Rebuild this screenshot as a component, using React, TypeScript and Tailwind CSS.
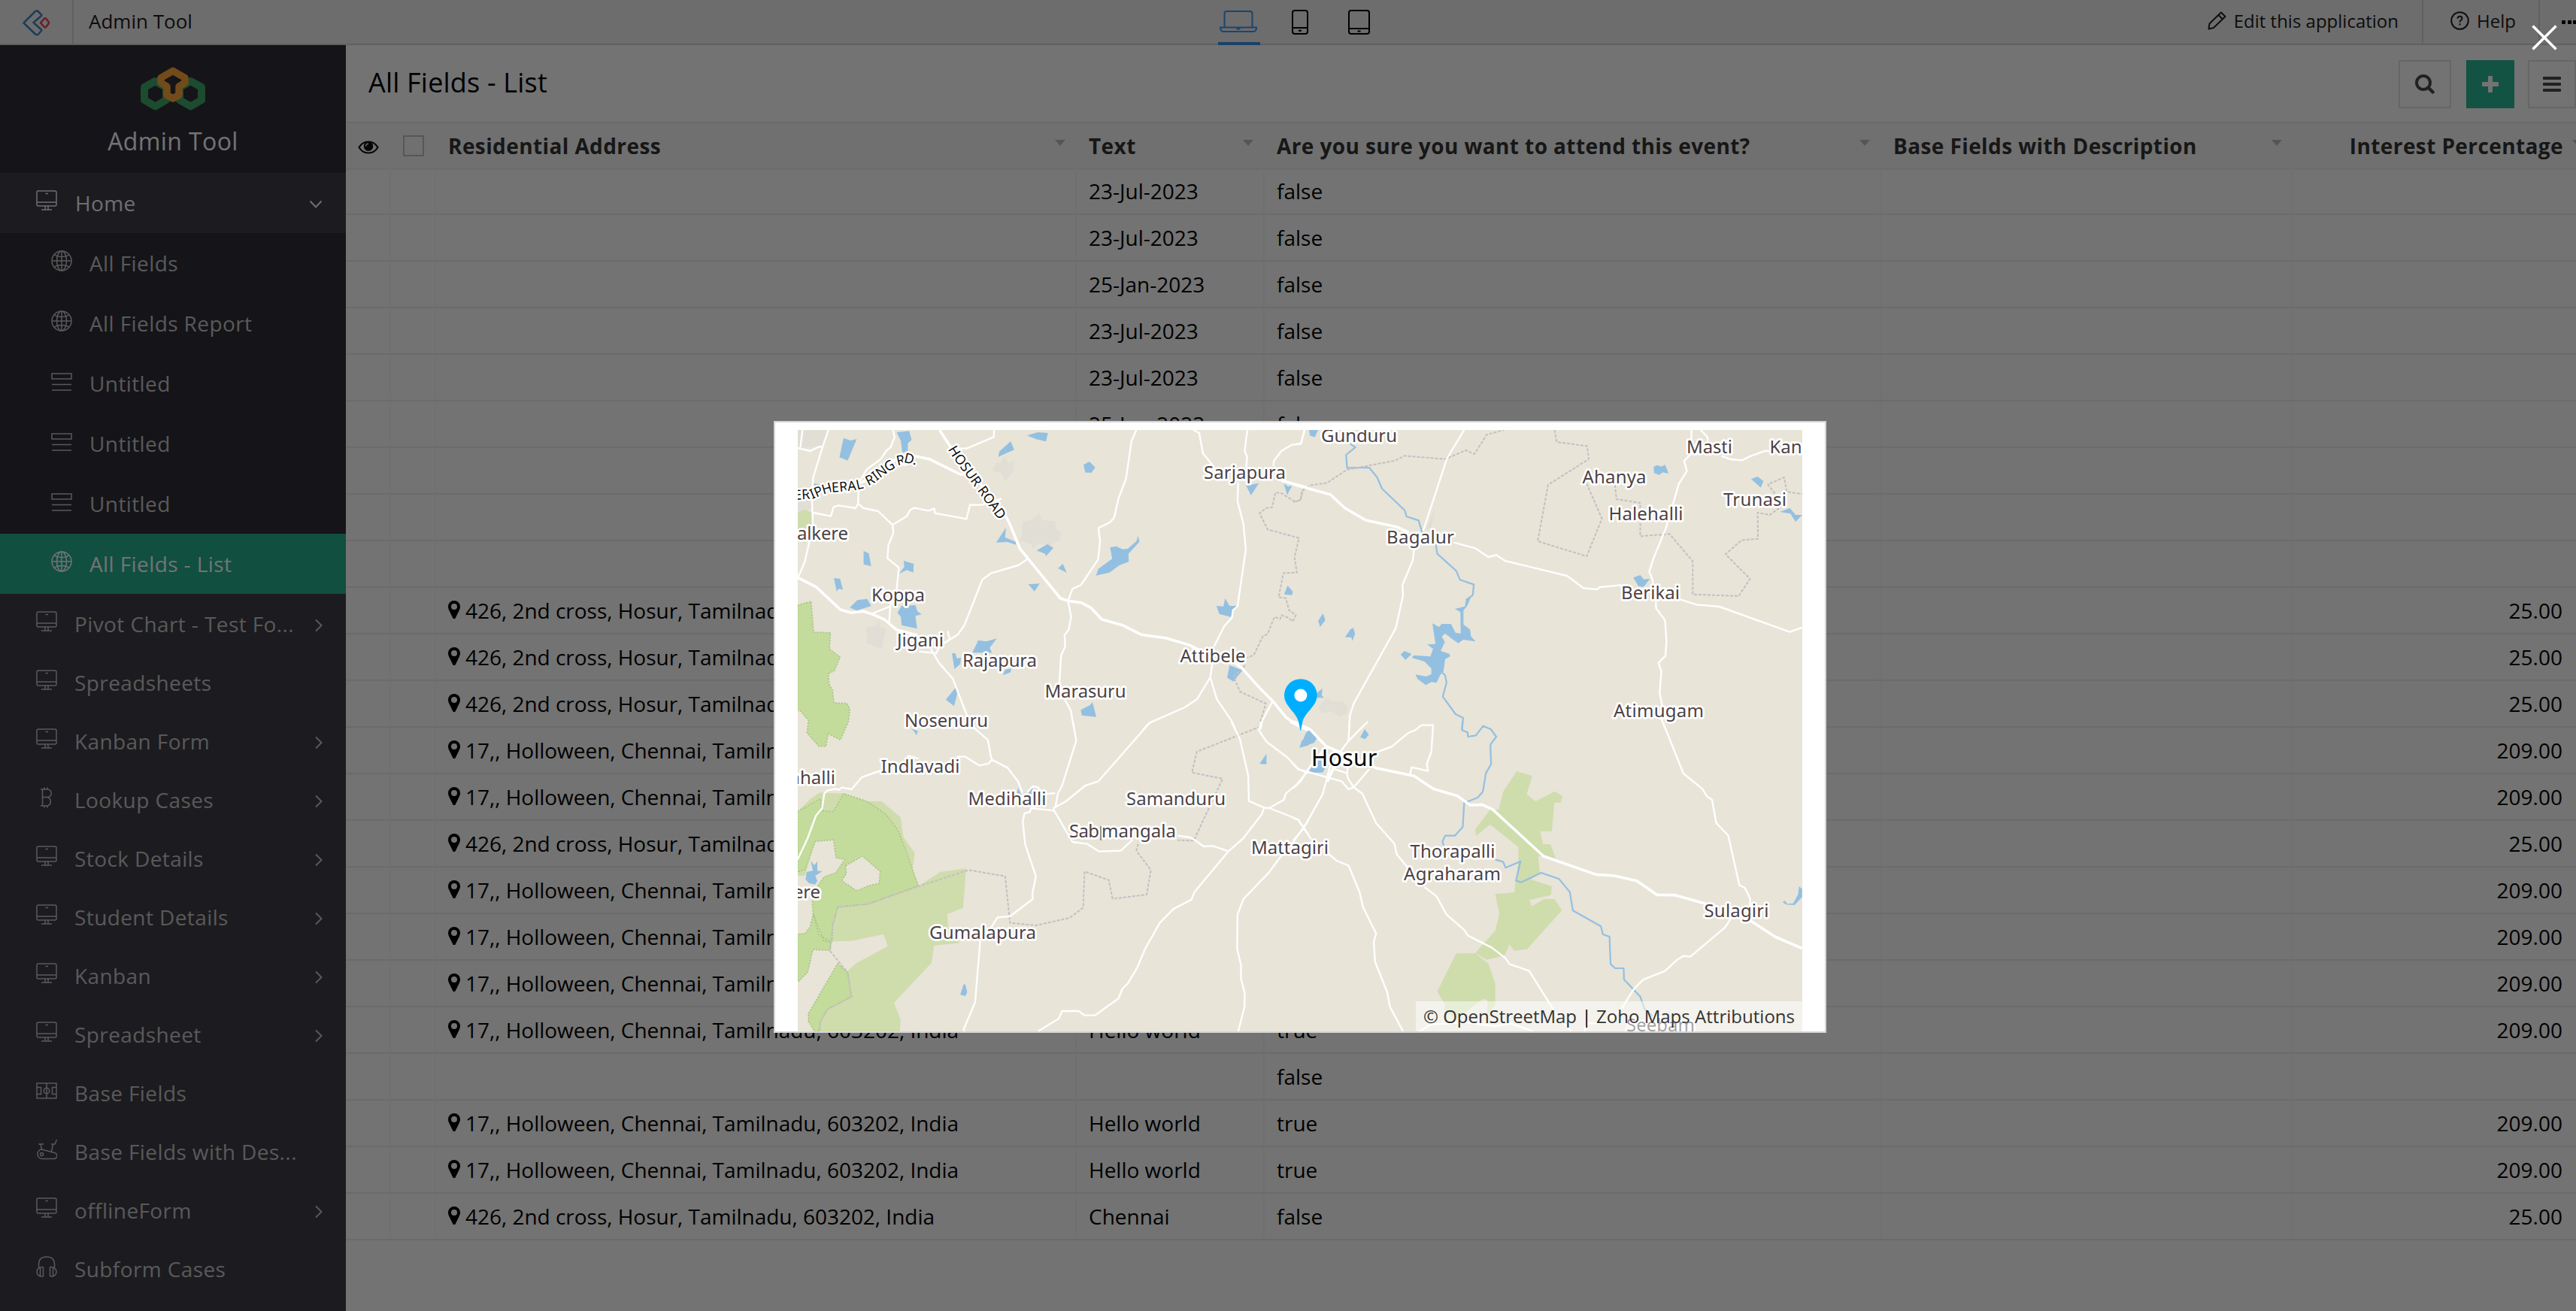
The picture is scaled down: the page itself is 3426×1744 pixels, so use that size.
import type { ReactNode } from "react";

type IconName = "monitor" | "globe" | "list" | "bitcoin" | "field" | "bike" | "headphones";

const iconPaths: Record<IconName, ReactNode> = {
  monitor: (
    <>
      <rect x="1" y="1" width="26" height="20" rx="2" />
      <path d="M1 16h26M12 21v5M16 21v5M7 26h14M12.5 4.500h3.500" />
    </>
  ),
  globe: (
    <>
      <circle cx="14" cy="14" r="13" />
      <ellipse cx="14" cy="14" rx="6.500" ry="13" />
      <path d="M14 1v26M1 14h26M4 5.500c5 4 15 4 20 0M4 22.500c5-4 15-4 20 0" />
    </>
  ),
  list: (
    <>
      <rect x="1" y="4" width="26" height="7" />
      <path d="M1 18.500h26M1 26h26" />
    </>
  ),
  bitcoin: <path d="M6 3h9a5 5 0 0 1 0 10.500H8.500M15 13.500a6 6 0 0 1 0 11.500H6M8.500 3v22M11 0.500v2.500M15 0.500v2.500M11 25v2.500M15 25v2.500" />,
  field: (
    <>
      <rect x="1" y="4" width="26" height="20" />
      <path d="M14 4v20M1 9.500h5.500v9H1M27 9.500h-5.500v9H27" />
      <circle cx="14" cy="14" r="3.700" />
    </>
  ),
  bike: (
    <>
      <path d="M3 7h7M6 7l1.500 7M20 7h5l2.500-6M25 7h-2.500l-2 10M7.500 14A6.300 6.300 0 0 0 7.500 26.500H23a4 4 0 0 0 1.500-8L7.500 14z" />
      <circle cx="7.500" cy="20.500" r="2" />
    </>
  ),
  headphones: (
    <path d="M3.500 15v-4C3.500 4 8 1 14 1s10.500 3 10.500 10v4M9.500 14.500v12.500M9.500 14.500C4 14 1 17 1 21s3 6.500 8.500 6M5.500 15.500v11M18.500 14.500v12.500M18.500 14.500c5.500-.5 8.500 2.500 8.500 6.500s-3 6.500-8.500 6M22.500 15.500v11" />
  ),
};

function NavIcon({ name }: { name: IconName }) {
  return (
    <svg viewBox="0 0 28 28" className="size-7 shrink-0" fill="none" stroke="currentColor" strokeWidth="1.500">
      {iconPaths[name]}
    </svg>
  );
}

const subItems: { label: string; icon: IconName; active?: boolean }[] = [
  { label: "All Fields", icon: "globe" },
  { label: "All Fields Report", icon: "globe" },
  { label: "Untitled", icon: "list" },
  { label: "Untitled", icon: "list" },
  { label: "Untitled", icon: "list" },
  { label: "All Fields - List", icon: "globe", active: true },
];

const navItems: { label: string; icon: IconName; more?: boolean }[] = [
  { label: "Pivot Chart - Test Fo...", icon: "monitor", more: true },
  { label: "Spreadsheets", icon: "monitor" },
  { label: "Kanban Form", icon: "monitor", more: true },
  { label: "Lookup Cases", icon: "bitcoin", more: true },
  { label: "Stock Details", icon: "monitor", more: true },
  { label: "Student Details", icon: "monitor", more: true },
  { label: "Kanban", icon: "monitor", more: true },
  { label: "Spreadsheet", icon: "monitor", more: true },
  { label: "Base Fields", icon: "field" },
  { label: "Base Fields with Des...", icon: "bike" },
  { label: "offlineForm", icon: "monitor", more: true },
  { label: "Subform Cases", icon: "headphones" },
];

function Sidebar() {
  return (
    <aside className="flex w-[460px] shrink-0 flex-col overflow-hidden bg-[#3f3d46] tracking-[0.4px] text-[#c6c5c6]">
      <div className="flex h-[170px] shrink-0 flex-col items-center bg-[#2f2e37] pt-[29px] text-white">
        <svg viewBox="0 0 86 58" className="h-[58px] w-[86px]" fill="none" strokeWidth="10" strokeLinejoin="round">
          <path d="M19.500 19L5 27v17l14.500 8.500L34 44V27z" stroke="#3fa66c" />
          <path d="M66.500 19L52 27v17l14.500 8.500L81 44V27z" stroke="#3fa66c" />
          <path
            d="M43 5.300L27 14.500v6.500l8 5v11.500l8 4.500 8-4.500V26l8-5v-6.500z"
            fill="#2f2e37"
            stroke="#fda63b"
            strokeWidth="9.500"
          />
        </svg>
        <div className="mt-[19px] text-[32px] leading-[44px]">Admin Tool</div>
      </div>
      <div className="flex h-20 shrink-0 items-center border-t border-[#45444e] pb-0.5 pl-12 pr-[31px] text-[28px] text-[#f4f4f4]">
        <span className="mb-1.5 flex">
          <NavIcon name="monitor" />
        </span>
        <span className="ml-6 flex-1">Home</span>
        <svg viewBox="0 0 18 12" className="mt-1 h-3 w-[18px]" fill="none" stroke="currentColor" strokeWidth="2">
          <path d="M1.500 1.500L9 9.500l7.500-8" />
        </svg>
      </div>
      <div className="shrink-0 bg-[#2f2e37] text-[28px]">
        {subItems.map((item, i) => (
          <div
            key={i}
            className={
              "flex h-20 items-center gap-[23px] pl-[68px] " + (item.active ? "bg-[#26b08f] text-white" : "")
            }
          >
            <span className="mb-1.5 flex">
              <NavIcon name={item.icon} />
            </span>
            <span>{item.label}</span>
          </div>
        ))}
      </div>
      <div className="shrink-0 text-[28px]">
        {navItems.map((item) => (
          <div key={item.label} className="flex h-[78px] items-center pl-12 pr-[30px] pt-0.5">
            <span className="mb-1.5 flex">
              <NavIcon name={item.icon} />
            </span>
            <span className="ml-[23px] flex-1 whitespace-nowrap">{item.label}</span>
            {item.more && (
              <svg viewBox="0 0 12 18" className="mt-1 h-[18px] w-3" fill="none" stroke="currentColor" strokeWidth="2">
                <path d="M2 1.500L9.500 9 2 16.500" />
              </svg>
            )}
          </div>
        ))}
      </div>
    </aside>
  );
}

function TopBar() {
  return (
    <header className="flex h-[60px] w-[3440px] shrink-0 border-b-2 border-[#d4d4d4] bg-[#f2f2f2] text-[#1b1b1b]">
      <div className="flex w-[98px] shrink-0 items-center justify-center border-r-2 border-[#d4d2dc]">
        <svg viewBox="0 0 36 35" className="mb-px mt-1 h-[35px] w-9" fill="none" strokeWidth="2.600" strokeLinejoin="round">
          <path d="M18.500 1.500q1-.5 2 .5l4.500 4.500q.6.800 0 1.500L14.500 17l10.500 9.500q.6.800 0 1.500l-4 4.500q-2 1.500-4 0L1.500 17.500 17 2q.8-.7 1.500-.5z" stroke="#4088c4" />
          <path d="M29 11.500q1-.6 2 0l3.500 4.500q.6 1.500 0 2.500L31 23q-1 .8-2 0l-5-5.500z" stroke="#e94550" />
        </svg>
      </div>
      <div className="flex w-[1522px] shrink-0 items-center pb-0.5 pl-5 text-[26px]">Admin Tool</div>
      <div className="flex h-[60px] w-[56px] items-start border-b-4 border-[#3c91ec] pl-0.5 pt-[14px]">
        <svg viewBox="0 0 50 29" className="h-[29px] w-[50px]" fill="none" stroke="#3c98f5" strokeWidth="2">
          <path d="M6.500 22V4q0-3 3-3h31q3 0 3 3v18M1 22.500h48c0 3.500-1 5.500-4 5.500H5c-3 0-4-2-4-5.500zM22.500 24.500h5" />
        </svg>
      </div>
      <svg viewBox="0 0 22 33" className="ml-[42px] mt-[13px] h-[33px] w-[22px]" fill="none" stroke="black" strokeWidth="2">
        <rect x="1" y="1" width="20" height="31" rx="3" />
        <path d="M1 24h20M9 27.800h4" />
      </svg>
      <svg viewBox="0 0 29 33" className="ml-[53px] mt-[13px] h-[33px] w-[29px]" fill="none" stroke="black" strokeWidth="2">
        <rect x="1" y="1" width="27" height="31" rx="3" />
        <path d="M1 25h27M12.500 28.500h4" />
      </svg>
      <div className="flex-1" />
      <div className="flex h-[58px] items-center border-r-2 border-[#d4d4d4] pb-[3px] pr-[31px] text-[24px]">
        <svg viewBox="0 0 25 25" className="mr-2.5 size-[25px]" fill="none" stroke="#222" strokeWidth="2">
          <path d="M1.500 23.500l1-7L18 1.500 23.500 7 8 22zM14.500 5l5.500 5.500" strokeLinejoin="round" />
        </svg>
        Edit this application
      </div>
      <div className="flex h-[58px] w-[155px] items-center border-r-2 border-[#d4d4d4] pb-[3px] pl-9 text-[24px]">
        <svg viewBox="0 0 25 25" className="mr-2.5 size-[25px]" fill="none" stroke="#222" strokeWidth="2">
          <circle cx="12.500" cy="12.500" r="11.300" />
          <path d="M9.500 9.800q.2-3 3-3t3 2.600q0 1.600-1.600 2.500-1.400.9-1.400 2.600M12.500 16.300v2.300" />
        </svg>
        Help
      </div>
      <div className="flex h-[58px] w-[62px] items-center gap-[2.500px] pl-[29px]">
        <i className="size-[5px] rounded-[1px] bg-black" />
        <i className="size-[5px] rounded-[1px] bg-black" />
        <i className="size-[5px] rounded-[1px] bg-black" />
      </div>
    </header>
  );
}

const A426 = "426, 2nd cross, Hosur, Tamilnadu, 603202, India";
const A17 = "17,, Holloween, Chennai, Tamilnadu, 603202, India";

type Row = { address?: string; text?: string; attend?: string; interest?: string };

const hosur: Row = { address: A426, text: "Chennai", attend: "false", interest: "25.00" };
const chennai: Row = { address: A17, text: "Hello world", attend: "true", interest: "209.00" };

const rows: Row[] = [
  { text: "23-Jul-2023", attend: "false" },
  { text: "23-Jul-2023", attend: "false" },
  { text: "25-Jan-2023", attend: "false" },
  { text: "23-Jul-2023", attend: "false" },
  { text: "23-Jul-2023", attend: "false" },
  { text: "25-Jan-2023", attend: "false" },
  {},
  {},
  {},
  hosur,
  hosur,
  hosur,
  chennai,
  chennai,
  hosur,
  chennai,
  chennai,
  chennai,
  chennai,
  { attend: "false" },
  chennai,
  chennai,
  hosur,
];

const grid = "grid grid-cols-[60px_60px_852px_250px_820px_548px_400px]";

function Heading({ children }: { children: string }) {
  return (
    <div className="flex h-full items-center justify-between pl-4 pr-[15px]">
      <span>{children}</span>
      <svg viewBox="0 0 14 8" className="mb-[9px] h-2 w-3.5" fill="#bdbdbd">
        <path d="M0 0h14L7 8z" />
      </svg>
    </div>
  );
}

function Pin() {
  return (
    <svg viewBox="0 0 16 24" className="mr-[7px] mb-0.5 h-6 w-4 shrink-0">
      <path
        fillRule="evenodd"
        d="M8 0a8 8 0 0 1 8 8c0 2-.6 3.400-1.200 4.700L9.700 23.200a1.900 1.900 0 0 1-3.400 0L1.200 12.700C.6 11.400 0 10 0 8a8 8 0 0 1 8-8zm0 4a4 4 0 1 0 0 8 4 4 0 0 0 0-8z"
      />
    </svg>
  );
}

function Report() {
  return (
    <main className="flex min-w-0 flex-1 flex-col overflow-hidden bg-white">
      <div className="flex h-[104px] shrink-0 items-center border-b-2 border-[#ebebeb] pl-[30px]">
        <h1 className="flex-1 pb-0.5 text-[36px] tracking-[0.2px]">All Fields - List</h1>
        <div className="mt-0.5 flex">
          <div className="flex h-16 w-[70px] items-center justify-center border-2 border-[#e3e3e3]">
            <svg viewBox="0 0 26 26" className="size-[26px]" fill="none" stroke="#4a4a4a">
              <circle cx="11" cy="11" r="9" strokeWidth="4" />
              <path d="M17.500 17.500l6 6" strokeWidth="4.500" strokeLinecap="round" />
            </svg>
          </div>
          <div className="ml-5 flex h-16 w-16 items-center justify-center bg-[#2cb896]">
            <svg viewBox="0 0 22 22" className="size-[22px]" fill="white">
              <path d="M8 1q0-1 1-1h4q1 0 1 1v7h7q1 0 1 1v4q0 1-1 1h-7v7q0 1-1 1H9q-1 0-1-1v-7H1q-1 0-1-1V9q0-1 1-1h7z" />
            </svg>
          </div>
          <div className="ml-[18px] flex h-16 w-16 items-center justify-center border-2 border-[#e3e3e3]">
            <svg viewBox="0 0 24 20" className="h-5 w-6" fill="#4a4a4a">
              <rect width="24" height="4" rx="1" />
              <rect y="8" width="24" height="4" rx="1" />
              <rect y="16" width="24" height="4" rx="1" />
            </svg>
          </div>
        </div>
      </div>
      <div
        className={
          grid +
          " h-[62px] shrink-0 items-center border-b-2 border-[#efefef] bg-[#f9f9f9] text-[28px] font-bold tracking-[0.4px] text-[#333]"
        }
      >
        <svg viewBox="0 0 28 18" className="ml-4 mt-1 h-[18px] w-7">
          <path d="M1.500 9Q6 1.500 14 1.500T26.500 9Q22 16.500 14 16.500T1.500 9z" fill="none" stroke="#111" strokeWidth="2.200" />
          <circle cx="14" cy="7.500" r="6.300" fill="#111" />
          <path d="M10.500 7.500q.3-3 3.500-3.300" fill="none" stroke="#f9f9f9" strokeWidth="1.300" />
        </svg>
        <i className="ml-4 block size-7 border-2 border-[#c2c2c2]" />
        <Heading>Residential Address</Heading>
        <Heading>Text</Heading>
        <Heading>Are you sure you want to attend this event?</Heading>
        <Heading>Base Fields with Description</Heading>
        <div className="flex w-[385px] items-center justify-end gap-3">
          <span>Interest Percentage</span>
          <svg viewBox="0 0 14 8" className="mb-[9px] h-2 w-3.5" fill="#bdbdbd">
            <path d="M0 0h14L7 8z" />
          </svg>
        </div>
      </div>
      <div className="-mt-0.5 text-[28px] text-black">
        {rows.map((row, i) => (
          <div key={i} className={grid + " h-[62px] border-b-2 border-[#eeeeee]"}>
            <div className="border-r-2 border-[#f8f8f8]" />
            <div className="border-r-2 border-[#f8f8f8]" />
            <div className="flex items-center border-r-2 border-[#f8f8f8] pl-4">
              {row.address && (
                <>
                  <Pin />
                  <span className="tracking-[-0.02px]">{row.address}</span>
                </>
              )}
            </div>
            <div className="flex items-center border-r-2 border-[#f8f8f8] pl-4">{row.text}</div>
            <div className="flex items-center border-r-2 border-[#f8f8f8] pl-4">{row.attend}</div>
            <div className="border-r-2 border-[#f8f8f8]" />
            <div className="flex w-[358px] items-center justify-end">{row.interest}</div>
          </div>
        ))}
      </div>
    </main>
  );
}

/* ---- Map tile geometry, stored per quadrant in tile units ---- */

type Tile = {
  transform: string;
  park: string;
  forest: string;
  clearing: string;
  built: string;
  water: string;
  river: string;
  border: string;
  minor: string;
  major: string;
};

const tiles: Tile[] = [
  {
    transform: "translate(-41 -22) scale(0.45918 0.33333)",
    park: "M89 395L110 383L130 395L134 450L110 518L89 500Z",
    forest:
      "M89 765L128 750L135 873L184 875L181 940L212 972L196 1025L178 1040L180 1080L190 1105L194 1155L232 1157L240 1180L236 1230L213 1303L177 1278L171 1328L150 1328L116 1275L120 1225L97 1187L89 1187Z",
    clearing: "",
    built:
      "M89 66L178 66L165 130L89 138Z M89 330L130 330L130 380L89 395Z M665 195L675 200L688 170L700 198L718 190L712 235L690 270L680 240L652 228Z M740 432L765 425L788 398L795 425L835 430L838 460L851 475L850 505L815 530L790 515L770 540L765 520L730 510L738 490Z M287 850L313 850L325 820L327 850L345 860L333 940L290 918Z",
    water:
      "M222 98L242 108L260 102L234 188L210 175Z M376 75L412 70L419 105L408 120L408 155L392 155L388 110Z M753 88L785 75L814 78L808 112L780 103Z M706 111L716 145L670 173L673 152Z M917 205L934 192L951 215L940 236L922 236Z M692 456L690 495L720 512L722 524L697 513L664 515Z M781 547L812 522L830 536L808 570L806 560Z M857 600L868 635L843 618Z M757 682L790 679L775 710Z M1075 489L1079 512L1047 560L1048 592L1020 607L992 635L953 647L960 620L1000 580L994 535L1012 530L1030 542L1045 540L1070 510Z M280 549L295 558L302 610L280 602Z M396 588L425 600L424 635L405 625L383 640L398 612Z M194 657L212 660L220 703L208 700L202 710Z M290 740L302 768L260 787L240 775L262 745Z M390 768L430 765L436 790L448 802L430 808L435 859L390 845L388 812L378 795Z M612 905L635 910L666 898L645 935L652 955L595 955Z M536 957L546 958L550 978L562 975L560 1000L543 1020Z M708 1018L706 1033L683 1045L690 1022Z M546 1095L551 1120L542 1168L518 1142Z M943 1153L954 1211L912 1205L909 1183L935 1165Z M1327 738L1340 768L1360 768L1343 812L1310 800L1302 768L1322 770Z M1388 288L1425 278L1402 327Z M1497 280L1510 292L1521 288L1507 325Z M1508 687L1523 710L1521 725L1498 722Z M1340 1005L1378 1025L1362 1050L1352 1070L1333 1055Z M135 280L152 283L140 298Z",
    river: "",
    border:
      "M1568 292L1553 305L1545 345L1530 353L1490 318L1473 315L1463 375L1447 377L1427 398L1450 463L1541 497L1528 575L1535 635L1496 637L1482 733L1503 737L1512 785L1532 805L1523 830L1510 815L1490 805L1487 820L1470 812L1450 880L1436 890L1410 965L1390 975 M1385 1005L1352 1050L1370 1110L1445 1158L1425 1250",
    minor:
      "M178 66L162 130L134 255L130 330L133 450L110 590L90 655 M103 66L97 135 M89 138L126 150L150 133L162 132 M365 66L370 95L358 135L345 150L330 182L290 222L266 275L264 360L280 378L322 390L364 445L366 478L352 525L349 578L382 615L376 700L357 770L354 838 M264 360L257 378L207 367L193 374L185 410L133 396 M364 445L405 410L415 385L427 377L468 388L485 380L486 398L578 421L588 365L622 365L680 340 M658 66L657 94L578 140L550 140 M303 800L357 770 M475 940L498 995L538 1058L578 1200L600 1255 M440 950L490 957L500 930 M523 868L530 900L510 920L553 882L572 845L624 663L650 637L728 606L754 582 M1070 66L1056 110L1040 260L1018 340L1006 415L993 435L960 457L965 510L959 583L910 684L885 700L872 748L881 812L874 862L862 885L864 930L852 965L846 1100L880 1185L890 1260 M1235 66L1252 78L1263 160L1290 205 M1392 66L1388 100L1384 150L1391 175L1388 215 M1365 275L1363 350L1380 440L1387 543L1363 770L1350 785L1347 815L1325 848L1295 930 M1557 66L1547 120L1520 125L1490 150L1468 190L1467 210 M1290 1000L1284 1053L1246 1140L1210 1173L1108 1235L1090 1260 M1284 1053L1303 1140L1345 1225L1357 1260 M1465 1148L1435 1225L1430 1260",
    major:
      "M500 66L530 130L690 405L703 440L733 540L850 738L872 748L910 755L938 775L970 822L1030 845L1085 883L1155 896L1225 925L1260 950 M1350 990L1375 1015L1420 1085L1465 1148L1505 1215L1546 1250 M89 325L180 300L275 275L320 240L375 180L430 170L470 182L560 243L575 243 M89 655L142 692L213 783L243 795L280 790L303 800L340 822L375 863L435 885 M1490 268L1568 297",
  },
  {
    transform: "translate(-41 388) scale(0.45918 0.33333)",
    park: "M89 358L125 310L153 283L222 287L290 318L332 318L387 382L395 460L428 525L422 590L440 655L502 600L577 586L568 743L522 768L525 820L555 860L555 884L484 893L477 962L368 1122L387 1190L385 1236L137 1236L120 1195L120 1165L150 1105L205 965L233 995L260 963L350 896L338 848L245 875L189 877L183 913L133 910L118 1000L93 1035L89 1035L89 847L110 847L125 820L134 770L130 690L165 620L200 603L225 550L200 543L193 472L140 478L110 615L89 615Z",
    forest:
      "M89 358L155 308L158 355L192 360L222 287L290 318L345 370L378 430L400 505L438 655L293 728L205 740L190 815L189 877L165 877L135 770L150 850L183 877L183 913L133 910L118 1000L93 1035L89 1035L89 847L110 847L125 820L134 770L130 690L165 620L200 603L225 550L200 543L193 472L140 478L110 590L89 600Z M205 965L235 1005L245 1098L175 1148L154 1200L153 1236L137 1236L120 1195L120 1165Z",
    clearing: "M228 575L277 537L328 598L325 645L295 655L260 675L217 635L230 605Z",
    built: "",
    water:
      "M418 28L438 38L432 55L428 42Z M1447 128L1447 170L1427 168Z M1568 25L1568 95L1543 103L1555 65Z M728 265L738 295L724 285Z M768 263L774 290L755 290Z M127 556L137 573L146 558L146 595L160 598L140 615L146 635L140 650L122 645L112 630L115 600L133 595Z M570 1047L575 1050L580 1080L575 1095L560 1090Z",
    river: "",
    border:
      "M1432 0L1425 22L1245 120L1231 203L1320 228L1236 475L1190 473 M1075 488L1070 515L1112 592L1100 690L1001 707L990 632L920 598L916 742L877 783L780 813L704 803L690 617L585 592L450 652L293 728L205 740L190 815L183 915L233 1000L245 1098L175 1148L154 1200L153 1236",
    minor:
      "M600 25L640 73L648 135L652 152L697 184L728 240L740 285 M652 152L642 167L615 175L575 140L550 140 M405 140L412 137L440 148 M330 195L275 222L245 270L217 263L209 272L200 268L175 275L166 287L160 345L142 375L118 465L89 550 M886 0L896 75L855 255L843 285L835 345 M755 280L770 258L785 262L800 290L835 285 M1115 0L1105 10L960 238L922 255L866 318L830 345L832 355L765 345L762 360L746 366L741 398L748 490L779 617L769 685L770 708L704 777L668 781L650 820L618 870L603 1120L570 1228L573 1240 M832 355L885 480L928 488L962 518L1025 515L1060 470 M1190 455L1225 462L1240 473L1265 498L1292 496L1337 517 M1345 0L1370 70L1394 215L1396 317L1440 343L1455 345L1538 390L1568 450 M1430 0L1425 35L1447 80L1505 140L1540 190L1568 205 M1568 195L1535 250L1503 287L1497 312L1455 345L1440 343L1433 370L1380 465L1337 517L1238 680L1230 710L1177 748L1138 803L1096 905L1072 983L1045 1045L1030 1065L1018 1105L950 1172L920 1172L903 1155L855 1155L845 1185L785 1236 M1568 395L1525 480L1490 535L1452 605L1380 708L1363 770L1362 908L1373 970L1373 1025L1384 1085L1383 1140L1365 1236",
    major: "M1515 0L1568 35",
  },
  {
    transform: "translate(659 -22) scale(0.45918 0.33333)",
    park: "",
    forest: "",
    clearing: "",
    built:
      "M85 1150L100 1132L112 1150L140 1148L157 1165L157 1195L137 1210L110 1188L85 1196L73 1175Z M410 380L400 455L385 465Z",
    water:
      "M46 66L72 66L62 95L48 88Z M86 798L93 825L78 852L72 828Z M174 856L179 880L171 908L168 893L150 893L165 862Z M1044 212L1055 206L1065 212L1077 205L1087 240L1070 235L1060 245L1045 238Z M1326 262L1345 252L1362 270L1354 296Z M985 655L1005 645L1015 662L1033 660L1015 692L1000 690Z M1410 393L1438 377L1455 405L1474 405L1455 433L1440 400Z M500 745L517 725L503 770L493 785L493 842L512 862L515 890L528 910L492 903L478 917L460 900L440 878L430 890L439 912L427 948L453 960L454 970L440 980L435 1030L425 1045L415 1075L400 1072L384 1084L360 1060L354 1042L385 1050L400 1040L400 1018L380 990L343 975L350 965L397 970L405 940L388 922L412 920L403 838L422 852L430 840L457 840L470 875L485 878L484 792L468 780L497 770Z M311 962L322 948L343 960L325 984Z M85 1098L82 1125L89 1135L68 1135L68 1115Z",
    river:
      "M165 122L180 135L153 165L156 217L220 216L243 255L257 300L323 387L328 411L363 427L372 470L413 525L417 560L472 628L483 664L523 683L520 725L500 745 M432 1035L440 1045L444 1075L433 1130L470 1200L492 1215L489 1264",
    border:
      "M0 353L22 345L25 310L48 287L98 277L155 225L295 188L322 169L440 182L500 147L525 162L560 85L610 66 M757 66L763 114L851 130L856 182L738 285L708 510L850 570L894 420L850 280 M932 285L936 342L1005 357L1005 490L1090 481L1157 590L1157 722L1290 729L1323 660L1252 562L1298 506L1346 500L1345 396L1380 405L1415 370 M1395 320L1375 283L1422 255L1429 312L1474 322",
    minor:
      "M33 66L22 122L0 125 M495 66L445 180L376 470 M350 545L346 587L316 685L318 725L297 857L176 1155L164 1205L162 1260 M465 515L527 538L565 573L588 565L613 588L793 648L840 697L880 702L888 693L950 685 M1153 66L1153 160L1132 190L1140 230L1117 280L1098 370 M1085 430L1080 455L1043 580L1031 632L1040 660L1043 690 M1180 66L1200 95L1200 110 M1240 170L1267 183L1299 187L1325 170L1368 149L1385 152 M1120 742L1168 763L1234 771L1438 872L1474 854 M1050 750L1051 778L1077 826L1081 910L1078 967L1058 995L1066 1030L1061 1115L1068 1160L1065 1215L1078 1260",
    major: "M0 283L108 324L150 378L210 426L300 453L335 475 M0 1230L45 1260",
  },
  {
    transform: "translate(659 388) scale(0.45918 0.33333)",
    park: "M647 198L692 217L676 290L702 318L757 278L780 297L774 323L756 324L749 437L715 437L723 489L745 490L760 545L709 535L714 603L688 630L749 657L746 692L684 712L690 737L727 708L757 708L778 753L677 908L641 914L626 890L612 933L560 950L527 923L585 835L597 768L585 688L640 682L652 560L652 500L570 410L530 455L527 430L570 352L595 352L608 280Z M472 925L527 925L565 965L585 1045L585 1130L562 1170L563 1112L550 1106L470 1190L438 1150L440 1130L417 1077Z",
    forest: "",
    clearing: "",
    built: "",
    water:
      "M40 35L58 38L68 68L60 85L18 104L25 75L42 60Z M207 30L219 52L208 70L194 62Z M68 155L82 155L82 178L93 185L85 203L60 203L45 197Z M1465 657L1474 668L1474 700L1452 732L1427 730L1417 720L1425 715L1430 727L1448 725L1462 690Z",
    river:
      "M490 0L489 34L505 43L506 60L529 55L550 17L572 30L588 60L571 92L573 170L558 205L549 280L534 303L495 325L491 420L468 455L440 455L432 480L436 495 M585 550L608 560L615 583L658 558L645 635L660 641L718 603L770 628L801 680L810 754L891 817L897 849L916 858L919 967L932 984L957 984L958 1029L1005 1097L1017 1145L1040 1175",
    border: "",
    minor:
      "M1070 0L1130 207L1185 268L1198 298L1213 312L1225 404L1260 455L1292 652L1308 663L1324 708L1322 735 M1268 785L1250 822L1150 938L1130 935L1112 950L1077 995L1013 1030L985 1070L950 1148L905 1200L850 1205L843 1236 M163 0L160 75 M216 0L190 35L158 80L135 122L100 230 M85 290L30 425L0 475 M245 120L285 100L333 45L352 35L372 14L405 14L400 120L387 168L390 197L343 182L338 212 M0 170L15 190L140 238L160 270L175 262L220 190 M120 190L155 205L158 225L175 262L200 287L240 405L293 487L300 530L330 580 M157 205L157 150 M380 660L415 697L444 770L496 832L505 853L575 902L614 943L627 968L683 994L765 1175L805 1236 M0 385L15 392L52 470 M100 525L127 556L160 574L192 680L202 740L240 845L233 880L237 958L272 1080L280 1138L318 1236 M365 1236L400 1208L500 1200L585 1215L630 1205L695 1236 M0 265L20 240L55 165L95 98 M108 170L95 240L85 290 M130 150L100 240",
    major:
      "M0 0L50 32L95 98L135 122L240 185L350 217L405 268L475 296L512 333L547 331L577 350L725 537L877 610L930 615L995 635L1053 691L1105 692L1195 727 M1325 795L1395 858L1474 905",
  },
];

const places: [string, number, number, number][] = [
  ["alkere", -1, 146, 68],
  ["Koppa", 98, 228, 71],
  ["Jigani", 132, 288, 62],
  ["Rajapura", 219, 314.7, 99],
  ["Marasuru", 328.5, 355.7, 108],
  ["Nosenuru", 142, 394.7, 111],
  ["Sarjapura", 540, 65.3, 109],
  ["Attibele", 508.5, 309, 87],
  ["Indlavadi", 110.5, 456, 105],
  ["nhalli", -12, 471, 62],
  ["Medihalli", 226.5, 499, 104],
  ["Samanduru", 437, 499, 132],
  ["Sab", 361, 542, 40],
  ["mangala", 404, 542, 99],
  ["ere", -6, 623, 36],
  ["Gumalapura", 175, 677, 142],
  ["Mattagiri", 603, 564, 103],
  ["Gunduru", 696, 15.7, 101],
  ["Bagalur", 783, 151.3, 90],
  ["Masti", 1182, 31, 61],
  ["Kan", 1292.5, 31, 43],
  ["Ahanya", 1043.5, 70.7, 85],
  ["Halehalli", 1078.5, 120, 99],
  ["Trunasi", 1231, 100.7, 84],
  ["Berikai", 1095, 224.7, 78],
  ["Atimugam", 1085, 382.3, 120],
  ["Thorapalli", 814.5, 569, 113],
  ["Agraharam", 806, 599, 129],
  ["Sulagiri", 1205.5, 647.7, 86],
  ["Seebam", 1102, 799.7, 91],
];

function MapView() {
  const thin = { vectorEffect: "non-scaling-stroke" as const };
  return (
    <svg
      viewBox="0 0 1336 800"
      className="block h-[800px] w-[1336px] overflow-hidden bg-[#e8e4d8]"
      fill="none"
      strokeLinejoin="round"
      fontFamily="'Noto Sans', sans-serif"
    >
      <defs>
        <path id="hosur-road" d="M205.5 22L211 31L269 110L290 139" />
        <path id="ring-road" d="M-5 86L19 84.500L32 79L42 76L59 75L74 73.500L85 71L97 65L110 55L121 47L134 40L147 37L160 40L175 46" />
      </defs>
      {tiles.map((t, i) => (
        <g key={i} transform={t.transform}>
          <path d={t.built} fill="#e1ded6" />
          <path d={t.park} fill="#cfdcac" />
          <path d={t.forest} fill="#c3db9b" stroke="#a5c381" strokeWidth="1.500" strokeDasharray="2 2" {...thin} />
          <path d={t.clearing} fill="#e8e4d8" stroke="#a5c381" strokeWidth="1.500" strokeDasharray="2 2" {...thin} />
          <path d={t.water} fill="#93c0e1" />
          <path d={t.river} stroke="#93c0e1" strokeWidth="2.200" {...thin} />
        </g>
      ))}
      {tiles.map((t, i) => (
        <g key={i} transform={t.transform}>
          <path d={t.border} stroke="#c2c0c1" strokeWidth="2" strokeDasharray="4 2" {...thin} />
        </g>
      ))}
      {tiles.map((t, i) => (
        <g key={i} transform={t.transform} stroke="#fff">
          <path d={t.minor} strokeWidth="2.400" {...thin} />
          <path d={t.major} strokeWidth="3.600" {...thin} />
        </g>
      ))}
      <g fontSize="18" fill="#111" stroke="#fff" strokeWidth="5" paintOrder="stroke" dominantBaseline="central">
        <text>
          <textPath href="#hosur-road">HOSUR ROAD</textPath>
        </text>
        <text>
          <textPath href="#ring-road">ERIPHERAL RING RD.</textPath>
        </text>
      </g>
      <g fontSize="24" fill="#4c4245" stroke="#fff" strokeWidth="5.500" paintOrder="stroke">
        {places.map(([name, x, y, w]) => (
          <text key={name} x={x} y={y} textLength={w}>
            {name}
          </text>
        ))}
        <text x="683" y="447.300" fontSize="30" fill="#000" textLength="87.500">
          Hosur
        </text>
      </g>
      <path d="M403 527v19" stroke="#777" strokeWidth="1.500" />
      <path d="M668.700 401L666.500 390C664.500 376 647 368 647 353a21.850 21.850 0 1 1 43.700 0C690.700 368 673 376 671 390z" fill="#00aeff" />
      <ellipse cx="668.900" cy="353" rx="8.500" ry="8.500" fill="#fff" />
      <rect x="822" y="760" width="514" height="40" fill="#fff" fillOpacity="0.5" />
      <g fontSize="24" fontFamily="'Open Sans', sans-serif" fill="#333">
        <text x="832" y="789" textLength="204">© OpenStreetMap</text>
        <text x="1042.500" y="789" fill="#000">|</text>
        <text x="1062" y="789" textLength="264">Zoho Maps Attributions</text>
      </g>
    </svg>
  );
}

export default function App() {
  return (
    <div className="relative flex h-[1744px] w-full flex-col overflow-hidden font-['Open_Sans',sans-serif]">
      <TopBar />
      <div className="flex min-h-0 flex-1">
        <Sidebar />
        <Report />
      </div>
      <div className="absolute inset-0 bg-black/55">
        <button className="absolute right-[25px] top-[33px]" aria-label="Close">
          <svg viewBox="0 0 34 34" className="size-[34px]" stroke="#fff" strokeWidth="3.500">
            <path d="M1.500 1.500l31 31M32.500 1.500l-31 31" />
          </svg>
        </button>
        <div className="absolute left-[1029px] top-[560px] h-[814px] w-[1400px] overflow-hidden border-2 border-[#d5d5d5] bg-white pl-[30px] pt-[10px]">
          <MapView />
        </div>
      </div>
    </div>
  );
}
